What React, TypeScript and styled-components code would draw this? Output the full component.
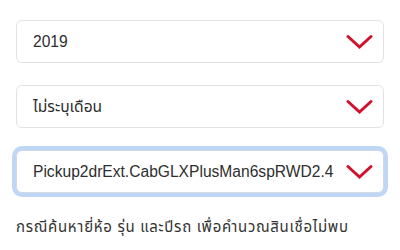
import React from "react";
import styled, { createGlobalStyle } from "styled-components";

const Global = createGlobalStyle`
  html, body { margin: 0; padding: 0; background: #ffffff; }
  body { font-family: "Liberation Sans", "Noto Sans", "Noto Sans Thai", sans-serif; }
`;

const Page = styled.div`
  width: 400px;
  height: 250px;
  box-sizing: border-box;
  padding: 20px 16px 0 16px;
  display: flex;
  flex-direction: column;
  background: #fff;
`;

const Field = styled.div<{ $focused?: boolean }>`
  height: 43px;
  box-sizing: border-box;
  display: flex;
  align-items: center;
  gap: 12px;
  padding: 0 10px 0 16px;
  border: 1px solid ${(p) => (p.$focused ? "#d3d9e4" : "#e2e2e2")};
  border-radius: 6px;
  background: #fff;
  box-shadow: ${(p) => (p.$focused ? "0 0 0 4px #bfd6f6" : "none")};
  margin-bottom: 22px;
`;

const Value = styled.div`
  flex: 1;
  min-width: 0;
  overflow: hidden;
  white-space: nowrap;
  font-size: 15.6px;
  color: #2e2e2e;
  line-height: 20px;
`;

const Chevron = () => (
  <svg width="27" height="16" viewBox="0 0 27 16" style={{ flexShrink: 0 }}>
    <path d="M2 2.5 L13.5 13 L25 2.5" fill="none" stroke="#d3112c" strokeWidth="3" strokeLinecap="round" strokeLinejoin="miter" />
  </svg>
);

const Note = styled.p`
  margin: 2px 0 0 0;
  font-size: 15px;
  letter-spacing: 0.7px;
  color: #333;
  line-height: 20px;
`;

export default function App() {
  return (
    <>
      <Global />
      <Page>
        <Field>
          <Value>2019</Value>
          <Chevron />
        </Field>
        <Field>
          <Value>ไม่ระบุเดือน</Value>
          <Chevron />
        </Field>
        <Field $focused>
          <Value>Pickup2drExt.CabGLXPlusMan6spRWD2.4D</Value>
          <Chevron />
        </Field>
        <Note>กรณีค้นหายี่ห้อ รุ่น และปีรถ เพื่อคำนวณสินเชื่อไม่พบ</Note>
      </Page>
    </>
  );
}
